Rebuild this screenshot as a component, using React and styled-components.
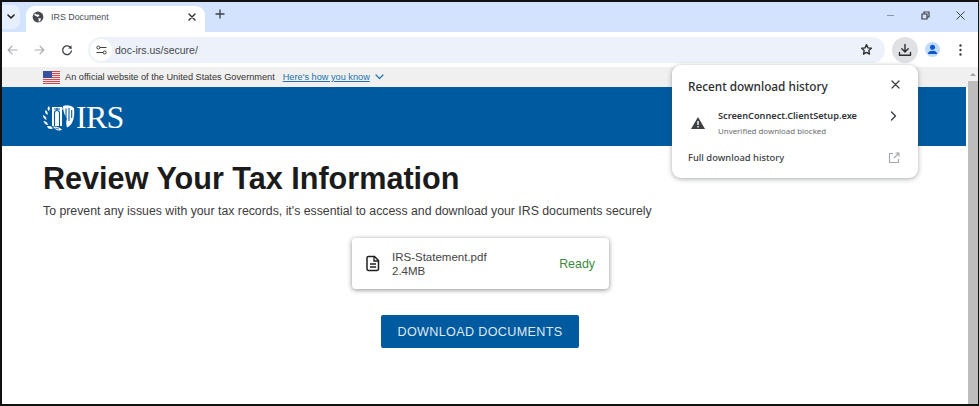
import React from "react";
import styled, { createGlobalStyle } from "styled-components";

const Global = createGlobalStyle`
  html, body { margin: 0; padding: 0; background: #fff; }
  body { font-family: "Liberation Sans", Arial, sans-serif; overflow: hidden; }
`;

const Frame = styled.div`
  position: relative;
  width: 979px; height: 406px; box-sizing: border-box;
  border: solid #111; border-width: 2px 1px 2px 2px;
  display: flex; flex-direction: column; overflow: hidden; background: #fff;
`;
const TabStrip = styled.div`
  height: 30px; flex: none; background: #d3e3fd;
  display: flex; align-items: flex-end; position: relative;
`;
const ListButton = styled.div`
  width: 18px; height: 24px; margin-bottom: 3px; background: #e6effd; border-radius: 0 8px 8px 0;
  display: flex; align-items: center; justify-content: center;
`;
const Tab = styled.div`
  width: 179px; height: 26px; margin-left: 6px; background: #fff; border-radius: 9px 9px 0 0;
  display: flex; align-items: center; padding: 0 9px 4px 6px; box-sizing: border-box; gap: 7px;
  font-size: 8.9px; color: #4a4d52;
`;
const TabTitle = styled.span`flex: 1;`;
const NewTab = styled.div`
  margin: 0 0 7px 10px; display: flex; align-items: center; height: 22px;
`;
const WinControls = styled.div`
  margin-left: auto; margin-bottom: 6px; padding-right: 13px; height: 22px;
  display: flex; align-items: center; gap: 26px;
`;
const Toolbar = styled.div`
  height: 35px; flex: none; background: #fff; border-radius: 8px 8px 0 0;
  display: flex; align-items: center; position: relative;
`;
const NavIcon = styled.div`
  width: ${(p) => p.$w}px; flex: none;
  display: flex; justify-content: center; align-items: center;
`;
const UrlBar = styled.div`
  width: 797px; height: 26px; margin-left: 10px; background: #edf2fa; border-radius: 13px; flex: none;
  display: flex; align-items: center; box-sizing: border-box; padding: 0 12px 0 2px;
  font-size: 10.5px; color: #44474b;
`;
const SiteChip = styled.div`
  width: 22px; height: 22px; border-radius: 50%; background: #fff;
  display: flex; align-items: center; justify-content: center; margin-right: 3px;
`;
const UrlText = styled.span`flex: 1;`;
const DownloadButton = styled.div`
  width: 26px; height: 26px; border-radius: 50%; background: #dfe1e5; margin-left: 7px; flex: none;
  display: flex; align-items: center; justify-content: center;
`;
const Avatar = styled.div`
  width: 15px; height: 15px; border-radius: 50%; background: #c2dbfb; margin-left: 7px; overflow: hidden; flex: none;
  display: flex; align-items: center; justify-content: center;
`;
const MenuDots = styled.div`margin-left: 19px; display: flex; flex: none;`;

const Viewport = styled.div`
  flex: 1; display: flex; flex-direction: column; position: relative; padding-right: 10px; min-height: 0;
`;
const Scrollbar = styled.div`
  position: absolute; right: 0; top: 0; bottom: 0; width: 10px; background: #f1f1f1;
  display: flex; flex-direction: column; align-items: center;
`;
const ScrollArrow = styled.div`
  margin-top: 6px; width: 0; height: 0;
  border-left: 3px solid transparent; border-right: 3px solid transparent; border-bottom: 3px solid #a3a3a3;
`;
const ScrollThumb = styled.div`margin-top: 5px; flex: 1; width: 100%; background: #bdbdbd;`;
const GovBanner = styled.div`
  height: 20px; flex: none; background: #f0f0f0; display: flex; align-items: center;
  padding-left: 41px; gap: 5px; font-size: 9.2px; color: #333;
`;
const GovLink = styled.span`color: #2273ab; text-decoration: underline; margin-left: 3px;`;
const Hero = styled.div`
  height: 59px; flex: none; background: #005a9f; display: flex; align-items: center; padding-left: 40px; margin-right: 2px;
`;
const Logo = styled.div`
  display: flex; align-items: center; color: #fff;
  font-family: "Liberation Serif", serif; font-size: 32px; line-height: 1; letter-spacing: -.7px;
`;
const Main = styled.div`
  padding: 14px 0 0 41px; display: flex; flex-direction: column; flex: 1;
`;
const Title = styled.h1`
  margin: 0; font-size: 30.6px; line-height: 36px; font-weight: 700; color: #1b1b1b;
`;
const Lead = styled.p`
  margin: 7px 0 0; font-size: 12.3px; line-height: 16px; color: #3c3c3c;
`;
const FileCard = styled.div`
  width: 257px; height: 51px; margin: 19px 0 0 309px; background: #fff; border-radius: 4px; box-sizing: border-box;
  box-shadow: 0 1px 5px rgba(0,0,0,.45);
  display: flex; align-items: center; padding: 0 14px 0 13px;
`;
const FileInfo = styled.div`
  margin-left: 11px; flex: 1; font-size: 11.5px; line-height: 14px; color: #444;
`;
const Ready = styled.span`font-size: 12.4px; color: #3c8a40;`;
const DownloadCta = styled.div`
  width: 198px; height: 33px; margin: 26px 0 0 338px; background: #005a9f; border-radius: 2px;
  color: #dfe9f2; font-size: 12.6px; display: flex; align-items: center; justify-content: center; letter-spacing: .35px;
`;

const Popup = styled.div`
  position: absolute; left: 670px; top: 63px; width: 246px; height: 113px; box-sizing: border-box;
  background: #fff; border-radius: 9px; box-shadow: 0 1px 5px rgba(60,64,67,.45);
  padding: 13px 18px 0 16px; display: flex; flex-direction: column;
  font-family: "Noto Sans", "Liberation Sans", sans-serif; color: #2b2d30;
`;
const PopupRow = styled.div`display: flex; align-items: center; justify-content: space-between;`;
const PopupTitle = styled.span`font-size: 11.8px; font-weight: 500; line-height: 16px; color: #2b2d30;`;
const ItemRow = styled.div`display: flex; align-items: flex-start; margin-top: 16px;`;
const WarnWrap = styled.div`width: 30px; padding-left: 3px; padding-top: 2px; box-sizing: border-box; flex: none;`;
const ItemText = styled.div`flex: 1;`;
const ItemName = styled.div`font-size: 9.2px; font-weight: 600; line-height: 12px; color: #33363a;`;
const ItemSub = styled.div`font-size: 7.9px; line-height: 11px; margin-top: 4px; color: #6a6d71;`;
const FullHistory = styled(PopupRow)`margin-top: 14px;`;
const FullLabel = styled.span`font-size: 9.4px; font-weight: 500; color: #3c4043;`;

const stroke = { fill: "none", strokeLinecap: "round", strokeLinejoin: "round" };

const Emblem = () => (
  <svg width="33" height="27" viewBox="0 0 33 27" style={{ marginRight: 1, marginTop: 2 }}>
    <g fill="#fff">
      <path d="M7 2c1 2 1 3 0 5-2-1-2-3 0-5zM3.500 6c2 1 2.500 3 2 5-2-1-3-3-2-5zM1 11c2 1 3.500 2 3.500 5C2.500 15.500 1 13.500 1 11zM1.500 17c2 0 4 1 4.500 4-2.500 0-4-2-4.500-4zM5 22.500c2-1 4.500-.5 6 2-2.500 1-5 .5-6-2z" />
      <path d="M10 3h10l1 2-1 1v16H10z" />
      <path d="M11 22.500c3 0 7 .5 9 3.500-3 1-7 .5-9-3.500z" />
      <path d="M21 2c4-1.500 8-1 11 2 .5 5 .5 10-2 15-1.500 2-3 3.500-5 4.500-1-3-1-6 0-9-2.500-3-4-7.500-4-12.500z" />
    </g>
    <path d="M12.500 22V9a2.500 2.500 0 0 1 5 0v13M15 3.800v3M12 5h6M24 4.500v9M27 4v13M29.700 6v8" stroke="#005a9f" strokeWidth="1.100" fill="none" />
    <path d="M13 24l4 1" stroke="#005a9f" strokeWidth=".8" fill="none" />
  </svg>
);

const Flag = () => (
  <svg width="17" height="13" viewBox="0 0 17 13">
    <rect width="17" height="13" fill="#e9e4e6" />
    {[0, 2, 4, 6, 8, 10, 12].map((y) => <rect key={y} y={y} width="17" height="1" fill="#d04a50" />)}
    <rect width="9" height="7" fill="#3a4f9f" />
  </svg>
);

export default function App() {
  return (
    <Frame>
      <Global />
      <TabStrip>
        <ListButton>
          <svg width="8" height="6" viewBox="0 0 8 6"><path d="M1 1l3 3 3-3" stroke="#1f1f1f" strokeWidth="1.600" {...stroke} /></svg>
        </ListButton>
        <Tab>
          <svg width="12" height="12" viewBox="0 0 12 12">
            <circle cx="6" cy="6" r="5.400" fill="#45484c" />
            <path d="M3 2.500l2 1.200 1.500-.5 1 1.500-1.800 1.300L4 5 2 4zM6.500 7l2.600.4L8 10.200l-1.300.4z" fill="#fff" />
          </svg>
          <TabTitle>IRS Document</TabTitle>
          <svg width="8" height="8" viewBox="0 0 8 8"><path d="M1 1l6 6M7 1L1 7" stroke="#2b2d30" strokeWidth="1.400" {...stroke} /></svg>
        </Tab>
        <NewTab>
          <svg width="10" height="10" viewBox="0 0 10 10"><path d="M5 1v8M1 5h8" stroke="#3c4043" strokeWidth="1.300" {...stroke} /></svg>
        </NewTab>
        <WinControls>
          <svg width="9" height="9" viewBox="0 0 9 9"><path d="M1 4.500h7" stroke="#8b97a8" strokeWidth="1" /></svg>
          <svg width="9" height="9" viewBox="0 0 9 9"><path d="M1 3h5v5H1zM3 3V1h5v5H6" stroke="#3c4043" strokeWidth="1.200" fill="none" /></svg>
          <svg width="9" height="9" viewBox="0 0 9 9"><path d="M.5.500l8 8M8.500.500l-8 8" stroke="#3c4043" strokeWidth="1" /></svg>
        </WinControls>
      </TabStrip>
      <Toolbar>
        <NavIcon $w={20}>
          <svg width="11" height="10" viewBox="0 0 11 10"><path d="M10 5H1.500M5 1.200L1.200 5 5 8.800" stroke="#a9acb0" strokeWidth="1.200" {...stroke} /></svg>
        </NavIcon>
        <NavIcon $w={34}>
          <svg width="11" height="10" viewBox="0 0 11 10"><path d="M1 5h8.500M6 1.200L9.800 5 6 8.800" stroke="#a9acb0" strokeWidth="1.200" {...stroke} /></svg>
        </NavIcon>
        <NavIcon $w={22}>
          <svg width="12" height="12" viewBox="0 0 12 12"><path d="M10 4.200A4.400 4.400 0 1 0 10.400 7" stroke="#3c4043" strokeWidth="1.300" {...stroke} /><path d="M10.500 1.200v3.400H7.100z" fill="#3c4043" /></svg>
        </NavIcon>
        <UrlBar>
          <SiteChip>
            <svg width="11" height="10" viewBox="0 0 11 10">
              <path d="M4 2.500h6.500M.5 7.500H7" stroke="#3c4043" strokeWidth="1.100" fill="none" />
              <circle cx="2.300" cy="2.500" r="1.500" fill="none" stroke="#3c4043" />
              <circle cx="8.700" cy="7.500" r="1.500" fill="none" stroke="#3c4043" />
            </svg>
          </SiteChip>
          <UrlText>doc-irs.us/secure/</UrlText>
          <svg width="13" height="13" viewBox="0 0 24 24"><path d="M12 3l2.700 6 6.300.7-4.700 4.300 1.300 6.500L12 17.200 6.400 20.500 7.700 14 3 9.700 9.300 9z" fill="none" stroke="#2b2d30" strokeWidth="2.400" strokeLinejoin="round" /></svg>
        </UrlBar>
        <DownloadButton>
          <svg width="14" height="14" viewBox="0 0 14 14"><path d="M7 1.500v7M3.800 5.800L7 9l3.200-3.200M1.500 9.500v2.800h11V9.500" stroke="#2b2d30" strokeWidth="1.400" {...stroke} /></svg>
        </DownloadButton>
        <Avatar>
          <svg width="15" height="15" viewBox="0 0 15 15"><circle cx="7.500" cy="5.300" r="2.500" fill="#0b57d0" /><path d="M2.800 12c0-4.500 9.400-4.500 9.400 0z" fill="#0b57d0" /></svg>
        </Avatar>
        <MenuDots>
          <svg width="3" height="12" viewBox="0 0 3 12"><circle cx="1.500" cy="1.500" r="1.200" fill="#3c4043" /><circle cx="1.500" cy="6" r="1.200" fill="#3c4043" /><circle cx="1.500" cy="10.500" r="1.200" fill="#3c4043" /></svg>
        </MenuDots>
      </Toolbar>
      <Viewport>
        <Scrollbar><ScrollArrow /><ScrollThumb /></Scrollbar>
        <GovBanner>
          <Flag />
          <span>An official website of the United States Government</span>
          <GovLink>Here's how you know</GovLink>
          <svg width="9" height="6" viewBox="0 0 9 6"><path d="M1 1l3.500 3.500L8 1" stroke="#2273ab" strokeWidth="1.200" {...stroke} /></svg>
        </GovBanner>
        <Hero>
          <Logo><Emblem />IRS</Logo>
        </Hero>
        <Main>
          <Title>Review Your Tax Information</Title>
          <Lead>To prevent any issues with your tax records, it's essential to access and download your IRS documents securely</Lead>
          <FileCard>
            <svg width="16" height="17" viewBox="0 0 16 17">
              <path d="M3.500 1.500h6l4 4v8.500a1.500 1.500 0 0 1-1.500 1.500H3.500A1.500 1.500 0 0 1 2 14V3a1.500 1.500 0 0 1 1.500-1.500z" fill="none" stroke="#1f1f1f" strokeWidth="1.500" />
              <path d="M9 2v4h4M5 9h6M5 12h6" fill="none" stroke="#1f1f1f" strokeWidth="1.300" />
            </svg>
            <FileInfo>
              <div>IRS-Statement.pdf</div>
              <div>2.4MB</div>
            </FileInfo>
            <Ready>Ready</Ready>
          </FileCard>
          <DownloadCta>DOWNLOAD DOCUMENTS</DownloadCta>
        </Main>
      </Viewport>
      <Popup>
        <PopupRow>
          <PopupTitle>Recent download history</PopupTitle>
          <svg width="9" height="9" viewBox="0 0 9 9" style={{ marginTop: -4 }}><path d="M1 1l7 7M8 1L1 8" stroke="#3c4043" strokeWidth="1.300" {...stroke} /></svg>
        </PopupRow>
        <ItemRow>
          <WarnWrap>
            <svg width="14" height="12" viewBox="0 0 14 12"><path d="M7 0l7 12H0z" fill="#3c4043" /><path d="M6.300 4h1.400v4H6.300zM6.300 9h1.400v1.400H6.300z" fill="#fff" /></svg>
          </WarnWrap>
          <ItemText>
            <ItemName>ScreenConnect.ClientSetup.exe</ItemName>
            <ItemSub>Unverified download blocked</ItemSub>
          </ItemText>
          <svg width="7" height="10" viewBox="0 0 7 10" style={{ marginTop: 1, marginRight: 3 }}><path d="M1.500 1l4 4-4 4" stroke="#3c4043" strokeWidth="1.400" {...stroke} /></svg>
        </ItemRow>
        <FullHistory>
          <FullLabel>Full download history</FullLabel>
          <svg width="12" height="12" viewBox="0 0 12 12"><path d="M5 1.500H1.500v9h9V7M6 6l5-5M7.500 1H11v3.500" stroke="#a3a6aa" strokeWidth="1.100" fill="none" /></svg>
        </FullHistory>
      </Popup>
    </Frame>
  );
}
